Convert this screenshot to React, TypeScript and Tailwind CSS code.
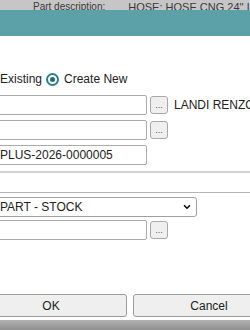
import { ChevronDown } from "lucide-react";

function DotsButton() {
  return (
    <button
      type="button"
      className="ml-[3px] flex h-[18px] w-[18px] shrink-0 items-end justify-center rounded-[3px] border border-[#a8a8a8] bg-[#efefef] pb-[3px] text-[9px] leading-[9px] text-[#555]"
    >
      ...
    </button>
  );
}

function Field({ value = "" }: { value?: string }) {
  return (
    <input
      type="text"
      readOnly
      value={value}
      className="ml-[-3px] h-[20px] w-[150px] shrink-0 rounded-[2px] border border-[#ababab] bg-white pl-[2px] text-[12px] text-[#222] outline-none"
    />
  );
}

export default function App() {
  return (
    <div className="flex h-[330px] w-[250px] flex-col overflow-hidden bg-[#9c9c9c] font-['Liberation_Sans',Arial,sans-serif] text-[12px] text-[#222]">
      {/* page behind the overlay */}
      <div className="flex h-[10px] shrink-0 overflow-hidden bg-[#c6c6c6] text-[#3a3a3a]">
        <span className="ml-[33px] mt-[1px] whitespace-nowrap text-[10px] leading-[12px]">Part description:</span>
        <span className="ml-[23px] mt-[1px] whitespace-nowrap text-[11px] leading-[12px]">HOSE: HOSE CNG 24'' LANDI</span>
      </div>

      {/* dialog title bar */}
      <div className="h-[26px] shrink-0 bg-[#5ba1a7]" />

      {/* dialog body */}
      <div className="flex h-[284px] shrink-0 flex-col bg-white pt-[36px]">
        <div className="flex h-[14px] items-center leading-[14px]">
          <span>Existing</span>
          <span className="ml-[4px] flex h-[13px] w-[13px] items-center justify-center rounded-full border-2 border-[#2d7f88] bg-white">
            <span className="h-[5px] w-[5px] rounded-full bg-[#1f6e77]" />
          </span>
          <span className="ml-[5px]">Create New</span>
        </div>

        <div className="mt-[9px] flex h-[20px] items-center">
          <Field />
          <DotsButton />
          <span className="ml-[6px] whitespace-nowrap">LANDI RENZO</span>
        </div>

        <div className="mt-[5px] flex h-[20px] items-center">
          <Field />
          <DotsButton />
        </div>

        <div className="mt-[5px] flex h-[20px] items-center">
          <Field value="PLUS-2026-0000005" />
        </div>

        <div className="mt-[6px] h-[2px] w-full bg-[#d2d2d2]" />
        <div className="mt-[19px] h-[1px] w-full bg-[#b4b4b4]" />

        <div className="relative mt-[4px] ml-[-3px] h-[20px] w-[200px]">
          <select className="h-[20px] w-[200px] appearance-none rounded-[3px] border border-[#a0a0a0] bg-white pl-[2px] text-[12px] text-[#222] outline-none">
            <option>PART - STOCK</option>
          </select>
          <ChevronDown
            size={10}
            strokeWidth={4}
            className="pointer-events-none absolute right-[5px] top-[5px] text-[#111]"
          />
        </div>

        <div className="mt-[3px] flex h-[20px] items-center">
          <Field />
          <DotsButton />
        </div>

        <div className="mt-[54px] ml-[-25px] flex gap-[6px]">
          <button
            type="button"
            className="h-[23px] w-[152px] shrink-0 rounded-[3px] border border-[#9c9c9c] bg-[#efefef] text-[12px] text-[#222]"
          >
            OK
          </button>
          <button
            type="button"
            className="h-[23px] w-[152px] shrink-0 rounded-[3px] border border-[#9c9c9c] bg-[#efefef] text-[12px] text-[#222]"
          >
            Cancel
          </button>
        </div>
      </div>

      <div className="h-[10px] shrink-0 bg-gradient-to-b from-[#b2b2b2] to-[#8f8f8f]" />
    </div>
  );
}
